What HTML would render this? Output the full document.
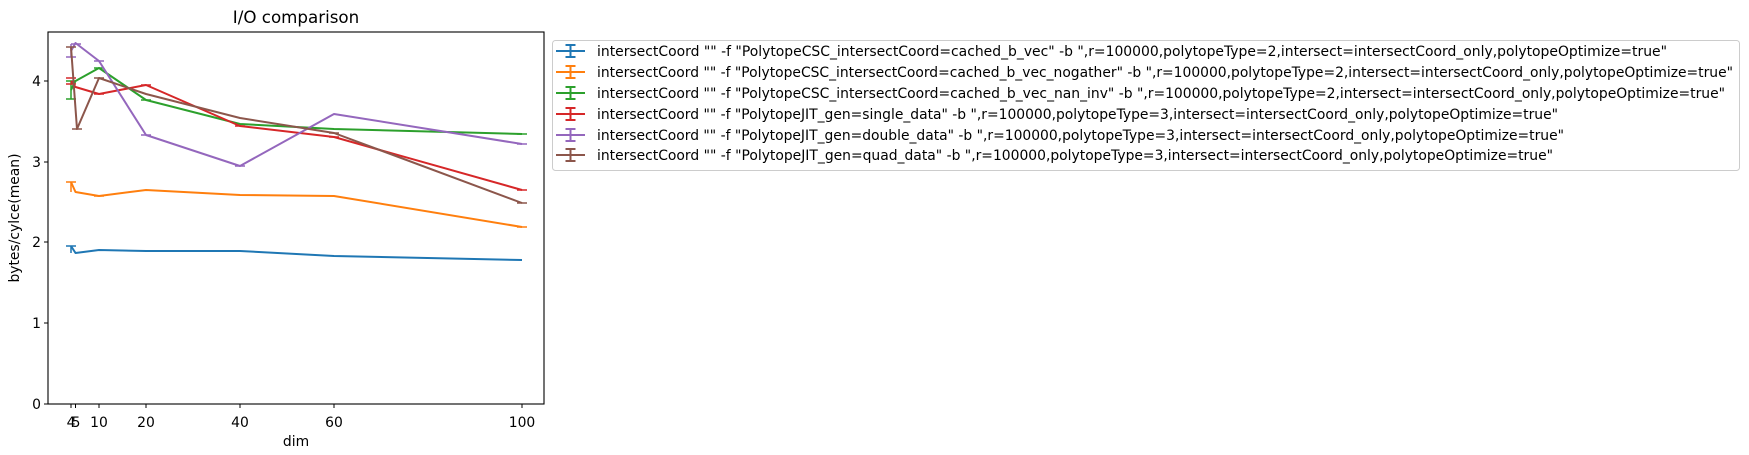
<!DOCTYPE html>
<html><head><meta charset="utf-8"><style>
html,body{margin:0;padding:0;background:#fff}
svg{display:block}
text{font-family:"DejaVu Sans","Liberation Sans",sans-serif;font-size:13.9px;fill:#000}
</style></head><body>
<svg width="1749" height="455" viewBox="0 0 1749 455" xmlns="http://www.w3.org/2000/svg">
<text x="296" y="23" text-anchor="middle" font-size="16.7" style="font-size:16.7px">I/O comparison</text>
<rect x="48" y="32" width="496" height="372" fill="none" stroke="#000" stroke-width="1.1"/>
<g stroke="#000" stroke-width="1">
<line x1="44" y1="404" x2="48" y2="404"/><line x1="44" y1="323" x2="48" y2="323"/><line x1="44" y1="242" x2="48" y2="242"/><line x1="44" y1="162" x2="48" y2="162"/><line x1="44" y1="81" x2="48" y2="81"/>
<line x1="71" y1="404" x2="71" y2="408"/><line x1="75.5" y1="404" x2="75.5" y2="408"/><line x1="99" y1="404" x2="99" y2="408"/><line x1="146" y1="404" x2="146" y2="408"/><line x1="240" y1="404" x2="240" y2="408"/><line x1="334" y1="404" x2="334" y2="408"/><line x1="522" y1="404" x2="522" y2="408"/>
</g>
<g text-anchor="end">
<text x="41" y="409">0</text><text x="41" y="328">1</text><text x="41" y="247">2</text><text x="41" y="167">3</text><text x="41" y="86">4</text>
</g>
<g text-anchor="middle">
<text x="71" y="427">4</text><text x="76" y="427">5</text><text x="99" y="427">10</text><text x="146" y="427">20</text><text x="240" y="427">40</text><text x="334" y="427">60</text><text x="522" y="427">100</text>
<text x="296" y="446">dim</text>
<text transform="translate(19,218) rotate(-90)">bytes/cylce(mean)</text>
</g>
<g fill="none" stroke-width="2" stroke-linejoin="round">
<polyline stroke="#1f77b4" points="71,246 75.5,253 99,250 146,251 240,251 334,256 522,260"/>
<path stroke="#1f77b4" stroke-width="1.5" d="M66,246h10M71,246v7"/>
<polyline stroke="#ff7f0e" points="71,182 75.5,192 99,196 146,190 240,195 334,196 522,227"/>
<path stroke="#ff7f0e" stroke-width="1.5" d="M66,182h10M71,182v10M94,196h10M517,227h10"/>
<polyline stroke="#2ca02c" points="71,90 75.5,81 99,68 146,100 240,124 334,129 522,134"/>
<path stroke="#2ca02c" stroke-width="1.5" d="M66,81h10M66,99h10M71,81v18M94,68h10M141,100h10M517,134h10"/>
<polyline stroke="#d62728" points="71,81 75.5,87 99,94 146,85 240,126 334,137 522,190"/>
<path stroke="#d62728" stroke-width="1.5" d="M66,78h10M66,84h10M94,94h10M141,85h10M235,126h10M329,137h10M517,190h10"/>
<polyline stroke="#9467bd" points="71,51 75.5,43 99,61 146,135 240,166 334,114 522,144"/>
<path stroke="#9467bd" stroke-width="1.5" d="M66,57h10M71,44v13M71,44h10M94,61h10M141,135h10M235,166h10M517,144h10"/>
<polyline stroke="#8c564b" points="71,47 77,129 99,78 146,94 240,118 334,133 522,203"/>
<path stroke="#8c564b" stroke-width="1.5" d="M66,47h10M72,129h10M94,78h10M329,133h10M517,203h10"/>
</g>
<rect x="552.5" y="40.5" width="1187" height="130" rx="3" fill="#fff" stroke="#ccc" stroke-width="1"/>
<g stroke-width="2" fill="none">
<path stroke="#1f77b4" d="M556,51h29M570.5,45v12M565.5,45h10M565.5,57h10"/>
<path stroke="#ff7f0e" d="M556,72h29M570.5,66v12M565.5,66h10M565.5,78h10"/>
<path stroke="#2ca02c" d="M556,93h29M570.5,87v12M565.5,87h10M565.5,99h10"/>
<path stroke="#d62728" d="M556,114h29M570.5,108v12M565.5,108h10M565.5,120h10"/>
<path stroke="#9467bd" d="M556,135h29M570.5,129v12M565.5,129h10M565.5,141h10"/>
<path stroke="#8c564b" d="M556,155h29M570.5,149v12M565.5,149h10M565.5,161h10"/>
</g>
<g xml:space="preserve">
<text x="597" y="56" textLength="1070" lengthAdjust="spacingAndGlyphs">intersectCoord "" -f "PolytopeCSC_intersectCoord=cached_b_vec" -b ",r=100000,polytopeType=2,intersect=intersectCoord_only,polytopeOptimize=true"</text>
<text x="597" y="77" textLength="1136" lengthAdjust="spacingAndGlyphs">intersectCoord "" -f "PolytopeCSC_intersectCoord=cached_b_vec_nogather" -b ",r=100000,polytopeType=2,intersect=intersectCoord_only,polytopeOptimize=true"</text>
<text x="597" y="98" textLength="1128" lengthAdjust="spacingAndGlyphs">intersectCoord "" -f "PolytopeCSC_intersectCoord=cached_b_vec_nan_inv" -b ",r=100000,polytopeType=2,intersect=intersectCoord_only,polytopeOptimize=true"</text>
<text x="597" y="119" textLength="961" lengthAdjust="spacingAndGlyphs">intersectCoord "" -f "PolytopeJIT_gen=single_data" -b ",r=100000,polytopeType=3,intersect=intersectCoord_only,polytopeOptimize=true"</text>
<text x="597" y="140" textLength="967" lengthAdjust="spacingAndGlyphs">intersectCoord "" -f "PolytopeJIT_gen=double_data" -b ",r=100000,polytopeType=3,intersect=intersectCoord_only,polytopeOptimize=true"</text>
<text x="597" y="160" textLength="956" lengthAdjust="spacingAndGlyphs">intersectCoord "" -f "PolytopeJIT_gen=quad_data" -b ",r=100000,polytopeType=3,intersect=intersectCoord_only,polytopeOptimize=true"</text>
</g>
</svg>
</body></html>
